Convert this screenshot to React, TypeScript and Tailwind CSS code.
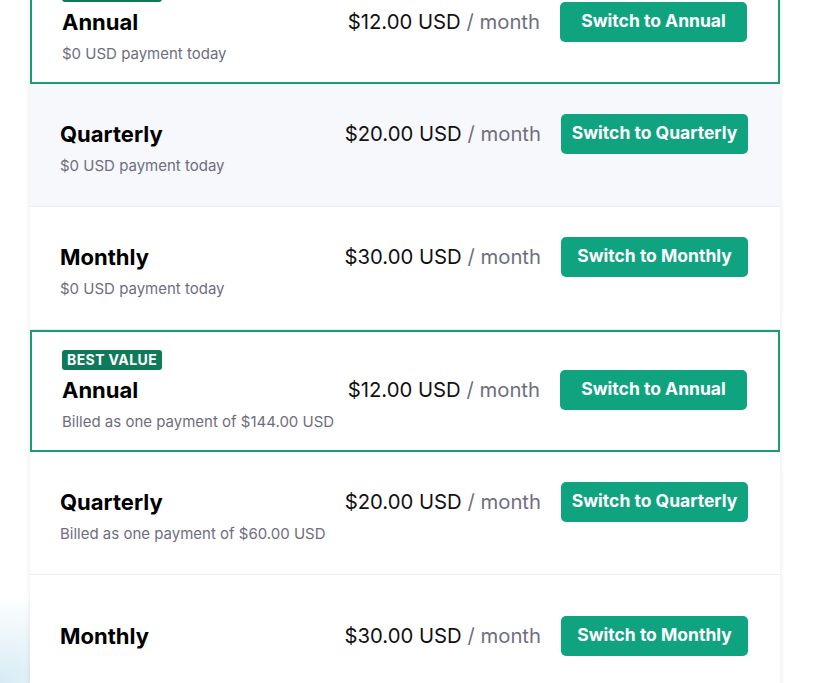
import React from "react";

type Plan = {
  name: string;
  price: string;
  sub?: string;
  badge?: boolean;
  selected?: boolean;
  hovered?: boolean;
  last?: boolean;
};

const plans: Plan[] = [
  { name: "Annual", price: "$12.00 USD", sub: "$0 USD payment today", badge: true, selected: true },
  { name: "Quarterly", price: "$20.00 USD", sub: "$0 USD payment today", hovered: true },
  { name: "Monthly", price: "$30.00 USD", sub: "$0 USD payment today" },
  { name: "Annual", price: "$12.00 USD", sub: "Billed as one payment of $144.00 USD", badge: true, selected: true },
  { name: "Quarterly", price: "$20.00 USD", sub: "Billed as one payment of $60.00 USD" },
  { name: "Monthly", price: "$30.00 USD", last: true },
];

function Row({ p }: { p: Plan }) {
  const base = "flex flex-col justify-center pb-[1px]";
  const cls = p.selected
    ? `${base} h-[122px] border-2 border-[#1a9b76] pl-[30px] pr-[31px] bg-white`
    : p.hovered
    ? `${base} h-[123px] border-b border-[#ececf1] pl-[30px] pr-[32px] bg-[#f7f8fc]`
    : `${base} h-[123px] border-b border-[#ececf1] pl-[30px] pr-[32px] bg-white`;
  return (
    <div className={cls}>
      {p.badge && (
        <div className="flex">
          <span className="h-[20px] px-[5px] rounded-[3px] bg-[#0f7a5a] text-white text-[14px] leading-[20px] font-bold tracking-[0.4px]">
            BEST VALUE
          </span>
        </div>
      )}
      <div className="flex items-center h-[40px]">
        <div className="flex-1 text-[22px] leading-[28px] font-bold text-black">{p.name}</div>
        <div className="text-[20.3px] leading-[28px] text-[#111111]">
          {p.price} <span className="text-[#6e6e80]">/ month</span>
        </div>
        <button className="ml-[20px] w-[187px] h-[40px] rounded-[5px] bg-[#10a37f] text-white text-[17.5px] font-bold flex items-center justify-center">
          Switch to {p.name}
        </button>
      </div>
      {p.sub && (
        <div className="mt-[2px] text-[15px] leading-[20px] text-[#6e6e80]">{p.sub}</div>
      )}
    </div>
  );
}

export default function App() {
  return (
    <div className="relative w-[822px] h-[683px] overflow-hidden bg-white font-['Inter',_'Noto_Sans',_sans-serif]">
      <div className="absolute left-0 bottom-0 w-[120px] h-[90px] bg-[radial-gradient(ellipse_at_bottom_left,_rgba(205,230,242,0.8),_rgba(255,255,255,0)_70%)]" />
      <div className="relative ml-[30px] mt-[-38px] w-[750px] bg-white shadow-[0_0_6px_rgba(0,0,0,0.09)]">
        {plans.map((p, i) => (
          <Row key={i} p={p} />
        ))}
      </div>
    </div>
  );
}
